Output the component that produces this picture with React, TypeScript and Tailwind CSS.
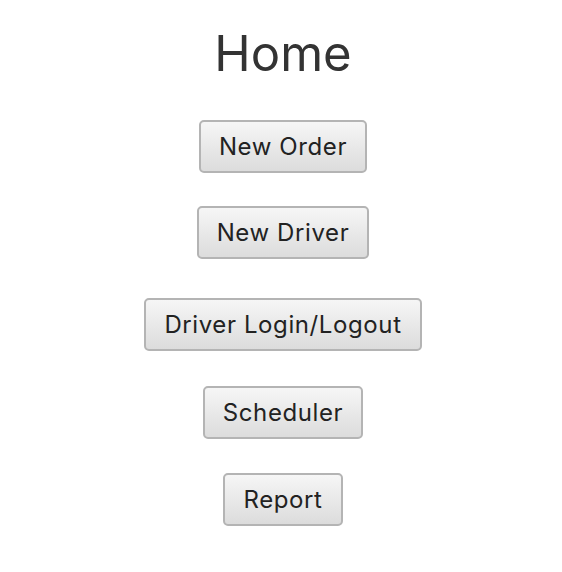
const buttons = [
  { label: 'New Order', gap: 'mt-[36px]' },
  { label: 'New Driver', gap: 'mt-[33px]' },
  { label: 'Driver Login/Logout', gap: 'mt-[39px]' },
  { label: 'Scheduler', gap: 'mt-[35px]' },
  { label: 'Report', gap: 'mt-[34px]' },
];

export default function App() {
  return (
    <div className="flex min-h-[572px] w-full flex-col items-center bg-white pt-[24px] pl-[4px] font-['Inter',sans-serif] text-[#333]">
      <h1 className="text-[49px] leading-[60px] font-normal">Home</h1>
      <div className="flex flex-col items-center">
        {buttons.map((b) => (
          <button
            key={b.label}
            className={`${b.gap} h-[53px] rounded-[5px] border-2 border-[#b4b4b4] bg-gradient-to-b from-[#f6f6f6] to-[#dcdcdc] px-[18px] text-[24px] tracking-[0.6px] text-[#222]`}
          >
            {b.label}
          </button>
        ))}
      </div>
    </div>
  );
}
